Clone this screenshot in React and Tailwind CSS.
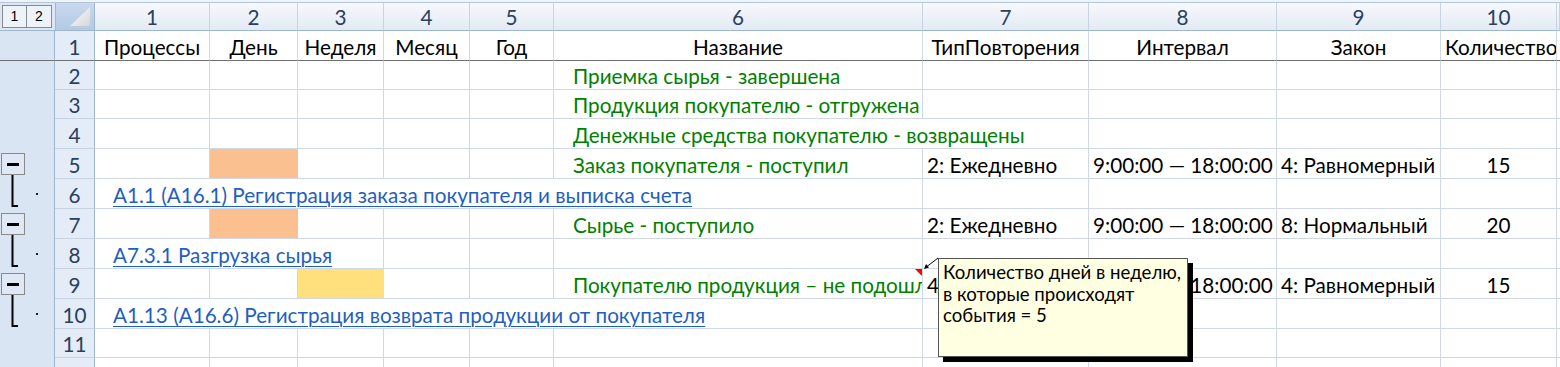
import clsx from 'clsx';

const GRID = 'grid grid-cols-[55px_40px_115px_88px_86px_86px_84px_369px_166px_188px_164px_116px_1fr]';

const E = {};
const G = (text, span) => ({ text, span, cls: 'text-[#008000] pl-[19px]' });
const T = (text) => ({ text, cls: 'pl-[4px]' });
const N = (text) => ({ text, cls: 'justify-center' });
const L = (text, span) => ({ text, span, cls: 'text-[#1f5fbf] underline decoration-1 underline-offset-[3px] pl-[18px]' });
const ORANGE = { cls: 'bg-[#fac090] border-r-[#fac090]' };
const YELLOW = { cls: 'bg-[#ffe07c] border-r-[#ffe07c]' };

const HEAD = [
  { text: 'Процессы', cls: 'justify-center' },
  { text: 'День', cls: 'justify-center' },
  { text: 'Неделя', cls: 'justify-center' },
  { text: 'Месяц', cls: 'justify-center' },
  { text: 'Год', cls: 'justify-center' },
  { text: 'Название', cls: 'justify-center' },
  { text: 'ТипПовторения', cls: 'justify-center' },
  { text: 'Интервал', cls: 'justify-center' },
  { text: 'Закон', cls: 'justify-center' },
  { text: 'КоличествоСобытий', cls: 'pl-[4px]' },
  E,
];

const ROWS = [
  { n: 2, h: 'h-[29px]', cells: [E, E, E, E, E, G('Приемка сырья - завершена'), E, E, E, E, E] },
  { n: 3, h: 'h-[29px]', cells: [E, E, E, E, E, G('Продукция покупателю - отгружена'), E, E, E, E, E] },
  { n: 4, h: 'h-[30px]', cells: [E, E, E, E, E, G('Денежные средства покупателю - возвращены', 'col-span-2'), E, E, E, E] },
  {
    n: 5, h: 'h-[30px]', outline: 'minus',
    cells: [E, ORANGE, E, E, E, G('Заказ покупателя - поступил'), T('2: Ежедневно'), T('9:00:00 — 18:00:00'), T('4: Равномерный'), N('15'), E],
  },
  { n: 6, h: 'h-[30px]', outline: 'bracket', cells: [L('А1.1 (А16.1) Регистрация заказа покупателя и выписка счета', 'col-span-6'), E, E, E, E, E] },
  {
    n: 7, h: 'h-[30px]', outline: 'minus',
    cells: [E, ORANGE, E, E, E, G('Сырье - поступило'), T('2: Ежедневно'), T('9:00:00 — 18:00:00'), T('8: Нормальный'), N('20'), E],
  },
  { n: 8, h: 'h-[30px]', outline: 'bracket', cells: [L('А7.3.1 Разгрузка сырья', 'col-span-3'), E, E, E, E, E, E, E, E] },
  {
    n: 9, h: 'h-[30px]', outline: 'minus',
    cells: [E, E, YELLOW, E, E, { ...G('Покупателю продукция – не подошла'), note: true }, T('4'), T('9:00:00 — 18:00:00'), T('4: Равномерный'), N('15'), E],
  },
  { n: 10, h: 'h-[30px]', outline: 'bracket', cells: [L('А1.13 (А16.6) Регистрация возврата продукции от покупателя', 'col-span-6'), E, E, E, E, E] },
  { n: 11, h: 'h-[29px]', cells: [E, E, E, E, E, E, E, E, E, E, E] },
  { n: 12, h: 'h-[30px]', cells: [E, E, E, E, E, E, E, E, E, E, E] },
];

function Cell({ c, last, frozen }) {
  return (
    <div
      className={clsx(
        'relative flex items-end overflow-hidden whitespace-nowrap pb-[1px] leading-[24px] border-b',
        !last && 'border-r',
        frozen ? 'border-[#d0d7e5] border-b-[#6f6f6f]' : 'border-[#d0d7e5]',
        c.span,
        c.cls
      )}
    >
      {c.text}
      {c.note && (
        <svg className="absolute top-0 right-0" width="7" height="7" viewBox="0 0 7 7">
          <polygon points="0,0 7,0 7,7" fill="#ff0000" />
        </svg>
      )}
    </div>
  );
}

function OutlineCell({ kind }) {
  return (
    <div className="relative flex items-center pl-[1px] bg-[#d9e5f3] border-r border-[#9eb6ce]">
      {kind === 'minus' && (
        <>
          <div className="relative z-10 flex items-center justify-center w-[24px] h-[22px] border border-[#8a8a8a] bg-[#dfe8f4]">
            <div className="w-[12px] h-[3px] bg-black" />
          </div>
          <svg className="absolute inset-0" width="55" height="30">
            <line x1="12.5" y1="24" x2="12.5" y2="30" stroke="#000" strokeWidth="2" />
          </svg>
        </>
      )}
      {kind === 'bracket' && (
        <svg className="absolute inset-0" width="55" height="30">
          <path d="M12.5 0 V27 H18" fill="none" stroke="#000" strokeWidth="2" />
          <rect x="36" y="14" width="2" height="2" fill="#222" />
        </svg>
      )}
    </div>
  );
}

function Row({ r }) {
  return (
    <div className={clsx(GRID, r.h)}>
      <OutlineCell kind={r.outline} />
      <div className="flex items-end justify-center pb-[1px] leading-[24px] bg-[#e4ecf7] border-r border-b border-r-[#9eb6ce] border-b-[#c5d3e3] text-[#27415f]">
        {r.n}
      </div>
      {r.cells.map((c, i) => (
        <Cell key={i} c={c} last={i === r.cells.length - 1} />
      ))}
    </div>
  );
}

export default function App() {
  return (
    <div className="relative w-[1560px] h-[367px] overflow-hidden bg-white text-black text-[20.7px] font-['Lato','Noto_Sans',sans-serif]">
      <div className="h-[3px] bg-[#eef3f9] border-b border-[#b4c6dc]" />

      {/* column numbers */}
      <div className={clsx(GRID, 'h-[28px]')}>
        <div className="flex items-start pt-[2px] pl-[2px] bg-[#dde7f3] border-b border-[#9eb6ce]">
          <div className="flex items-center justify-center w-[25px] h-[23px] border border-[#8a8a8a] bg-[#eef3f9] text-[14px] font-['Liberation_Sans',sans-serif]">1</div>
          <div className="flex items-center justify-center w-[25px] h-[23px] border border-l-0 border-[#8a8a8a] bg-[#eef3f9] text-[14px] font-['Liberation_Sans',sans-serif]">2</div>
        </div>
        <div className="relative bg-linear-to-b from-[#c9d9ee] to-[#b3c9e5] border-l border-r border-b border-[#9eb6ce]">
          <svg className="absolute inset-0" width="40" height="27">
            <defs>
              <linearGradient id="tri" x1="0" y1="0" x2="1" y2="1">
                <stop offset="0" stopColor="#ffffff" />
                <stop offset="1" stopColor="#d6d6d6" />
              </linearGradient>
            </defs>
            <polygon points="14,23 34,23 34,4" fill="url(#tri)" />
          </svg>
        </div>
        {['1', '2', '3', '4', '5', '6', '7', '8', '9', '10', ''].map((t, i) => (
          <div
            key={i}
            className="flex items-end justify-center pb-[1px] leading-[24px] text-[#27415f] bg-linear-to-b from-[#f7f9fc] to-[#e3eaf4] border-r border-b border-r-[#c5d3e3] border-b-[#9eb6ce]"
          >
            {t}
          </div>
        ))}
      </div>

      {/* header row (frozen) */}
      <div className={clsx(GRID, 'h-[30px]')}>
        <div className="bg-[#d9e5f3] border-r border-b border-r-[#9eb6ce] border-b-[#6f6f6f]" />
        <div className="flex items-end justify-center pb-[1px] leading-[24px] bg-[#e4ecf7] border-r border-b border-r-[#9eb6ce] border-b-[#6f6f6f] text-[#27415f]">
          1
        </div>
        {HEAD.map((c, i) => (
          <Cell key={i} c={c} last={i === HEAD.length - 1} frozen />
        ))}
      </div>

      {ROWS.map((r) => (
        <Row key={r.n} r={r} />
      ))}

      {/* comment arrow */}
      <svg className="absolute left-[915px] top-[254px]" width="30" height="22">
        <line x1="23" y1="4" x2="12" y2="12.5" stroke="#000" strokeWidth="1" />
        <polygon points="9,15 11,10 14,13.5" fill="#000" />
      </svg>

      {/* comment */}
      <div className="absolute left-[938px] top-[258px] w-[250px] h-[99px] border border-[#555] bg-[#ffffe1] shadow-[5px_5px_0_#000] px-[4px] pt-[3px] text-[18.6px] leading-[21.5px] whitespace-nowrap">
        <div>Количество дней в неделю,</div>
        <div>в которые происходят</div>
        <div>события = 5</div>
      </div>
    </div>
  );
}
